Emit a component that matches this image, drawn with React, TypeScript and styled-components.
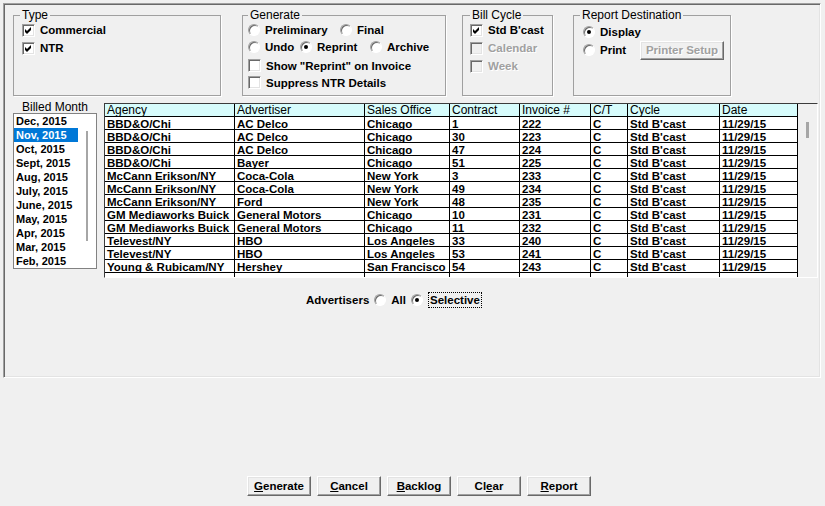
import React from 'react';
import styled, { createGlobalStyle } from 'styled-components';

const GlobalStyle = createGlobalStyle`
  html, body { margin: 0; padding: 0; background: #f0f0f0; }
  body { font-family: "Liberation Sans", Arial, sans-serif; color: #000; }
  #root { width: 825px; height: 506px; overflow: hidden; }
`;

const Screen = styled.div`
  width: 825px;
  height: 506px;
  box-sizing: border-box;
  padding: 3px 0 0 3px;
  background: #f0f0f0;
  display: flex;
  flex-direction: column;
`;

const Panel = styled.div`
  width: 818px;
  height: 375px;
  box-sizing: border-box;
  border: 1px solid;
  border-color: #a0a0a0 #fff #fff #a0a0a0;
  box-shadow: inset 1px 1px 0 #696969, inset -1px -1px 0 #e3e3e3;
  padding-top: 4px;
  display: flex;
  flex-direction: column;
`;

const TopRow = styled.div`
  display: flex;
  align-items: flex-start;
`;

const Group = styled.fieldset<{ $w: number; $ml: number; $pl: number }>`
  margin: 0 0 0 ${(p) => p.$ml}px;
  width: ${(p) => p.$w}px;
  height: 88px;
  min-width: 0;
  box-sizing: border-box;
  padding: 0 0 0 ${(p) => p.$pl}px;
  border: 1px solid #a0a0a0;
  box-shadow: 1px 1px 0 #fff;
`;

const Legend = styled.legend<{ $ml: number }>`
  margin-left: ${(p) => p.$ml}px;
  padding: 0 2px;
  font-size: 12px;
  line-height: 14px;
`;

const Stack = styled.div<{ $top: number; $row: number }>`
  display: flex;
  flex-direction: column;
  margin-top: ${(p) => p.$top}px;
  & > * { height: ${(p) => p.$row}px; }
`;

const Line = styled.div<{ $gapTop?: number }>`
  display: flex;
  align-items: center;
  margin-top: ${(p) => p.$gapTop ?? 0}px;
`;

const Option = styled.label<{ $w?: number; $disabled?: boolean }>`
  display: flex;
  align-items: center;
  gap: 5px;
  flex: none;
  ${(p) => (p.$w ? `width: ${p.$w}px;` : '')}
  font-size: 11.5px;
  font-weight: bold;
  white-space: nowrap;
  color: ${(p) => (p.$disabled ? '#a0a0a0' : '#000')};
  text-shadow: ${(p) => (p.$disabled ? '1px 1px 0 #fff' : 'none')};
`;

const Box = styled.span<{ $disabled?: boolean }>`
  width: 13px;
  height: 13px;
  flex: none;
  box-sizing: border-box;
  display: inline-flex;
  align-items: center;
  justify-content: center;
  background: ${(p) => (p.$disabled ? '#f0f0f0' : '#fff')};
  border: 1px solid;
  border-color: #a0a0a0 #fff #fff #a0a0a0;
  box-shadow: inset 1px 1px 0 #696969, inset -1px -1px 0 #e3e3e3;
`;

const RadioDot = styled.span<{ $checked?: boolean }>`
  width: 12px;
  height: 12px;
  flex: none;
  box-sizing: border-box;
  border-radius: 50%;
  background: #fff;
  border: 1px solid;
  border-color: #a0a0a0 #fff #fff #a0a0a0;
  box-shadow: inset 1px 1px 0 #696969;
  display: inline-flex;
  align-items: center;
  justify-content: center;
  &::after {
    content: '';
    width: 4px;
    height: 4px;
    border-radius: 50%;
    background: #000;
    display: ${(p) => (p.$checked ? 'block' : 'none')};
  }
`;

const WinButton = styled.button<{ $w: number; $h: number; $disabled?: boolean }>`
  width: ${(p) => p.$w}px;
  height: ${(p) => p.$h}px;
  flex: none;
  box-sizing: border-box;
  padding: 0;
  margin: 0;
  background: #f0f0f0;
  border: 1px solid;
  border-color: #fff #696969 #696969 #fff;
  box-shadow: inset -1px -1px 0 #a0a0a0, inset 1px 1px 0 #e3e3e3;
  font-family: "Liberation Sans", Arial, sans-serif;
  font-size: 11.5px;
  font-weight: bold;
  color: ${(p) => (p.$disabled ? '#a0a0a0' : '#000')};
  text-shadow: ${(p) => (p.$disabled ? '1px 1px 0 #fff' : 'none')};
  white-space: nowrap;
`;

const Key = styled.span`
  text-decoration: underline;
`;

const MiddleRow = styled.div`
  display: flex;
  align-items: flex-start;
  margin-top: 4px;
  padding-left: 9px;
`;

const MonthColumn = styled.div`
  width: 84px;
  flex: none;
  display: flex;
  flex-direction: column;
`;

const MonthLabel = styled.div`
  height: 13px;
  font-size: 12px;
  line-height: 14px;
  text-align: center;
  white-space: nowrap;
`;

const MonthList = styled.div`
  height: 156px;
  box-sizing: border-box;
  border: 1px solid #828282;
  background: #fff;
  display: flex;
`;

const MonthItems = styled.div`
  width: 64px;
  display: flex;
  flex-direction: column;
`;

const MonthItem = styled.div<{ $selected?: boolean }>`
  height: 14px;
  line-height: 14px;
  padding-left: 2px;
  font-size: 11px;
  font-weight: bold;
  white-space: nowrap;
  background: ${(p) => (p.$selected ? '#0078d7' : 'transparent')};
  color: ${(p) => (p.$selected ? '#fff' : '#000')};
`;

const ScrollTrack = styled.div<{ $top: number; $left: number }>`
  flex: 1;
  padding: ${(p) => p.$top}px 0 0 ${(p) => p.$left}px;
`;

const Thumb = styled.div<{ $w: number; $h: number }>`
  width: ${(p) => p.$w}px;
  height: ${(p) => p.$h}px;
  background: #a6a6a6;
`;

const GridFrame = styled.div`
  margin: 3px 0 0 7px;
  width: 714px;
  height: 175px;
  box-sizing: border-box;
  border: 1px solid;
  border-color: #3c3c3c #fff #fff #3c3c3c;
  background: #f0f0f0;
  display: flex;
  overflow: hidden;
`;

const Grid = styled.div`
  display: grid;
  grid-template-columns: 130px 130px 85px 70px 71px 37px 92px 78px;
  grid-auto-rows: 13px;
  width: 693px;
  flex: none;
  align-content: start;
`;

const HeadCell = styled.div`
  box-sizing: border-box;
  border-right: 1px solid #000;
  border-bottom: 1px solid #000;
  background: #d7fcfc;
  padding-left: 2px;
  font-size: 12px;
  line-height: 13px;
  white-space: nowrap;
  overflow: hidden;
`;

const Cell = styled.div`
  box-sizing: border-box;
  border-right: 1px solid #000;
  border-bottom: 1px solid #000;
  background: #fff;
  padding-left: 2px;
  font-size: 11.5px;
  font-weight: bold;
  line-height: 14px;
  white-space: nowrap;
  overflow: hidden;
`;

const AdvRow = styled.div`
  display: flex;
  align-items: center;
  gap: 5px;
  height: 16px;
  margin: 14px 0 0 302px;
`;

const AdvLabel = styled.span`
  font-size: 11.5px;
  font-weight: bold;
`;

const Focus = styled.span`
  box-sizing: border-box;
  height: 16px;
  line-height: 14px;
  padding: 0 1px;
  border: 1px dotted #000;
`;

const ButtonBar = styled.div`
  display: flex;
  gap: 6px;
  margin-top: 98px;
  padding-left: 244px;
`;

const Check = ({ disabled, checked }: { disabled?: boolean; checked?: boolean }) => (
  <Box $disabled={disabled}>
    {checked && (
      <svg width="7" height="7" viewBox="0 0 7 7">
        <polygon points="0,2 2,4 6,0 6,3 2,7 0,5" fill="#000" />
      </svg>
    )}
  </Box>
);

const columns = ['Agency', 'Advertiser', 'Sales Office', 'Contract', 'Invoice #', 'C/T', 'Cycle', 'Date'];

const rows: string[][] = [
  ['BBD&O/Chi', 'AC Delco', 'Chicago', '1', '222'],
  ['BBD&O/Chi', 'AC Delco', 'Chicago', '30', '223'],
  ['BBD&O/Chi', 'AC Delco', 'Chicago', '47', '224'],
  ['BBD&O/Chi', 'Bayer', 'Chicago', '51', '225'],
  ['McCann Erikson/NY', 'Coca-Cola', 'New York', '3', '233'],
  ['McCann Erikson/NY', 'Coca-Cola', 'New York', '49', '234'],
  ['McCann Erikson/NY', 'Ford', 'New York', '48', '235'],
  ['GM Mediaworks Buick', 'General Motors', 'Chicago', '10', '231'],
  ['GM Mediaworks Buick', 'General Motors', 'Chicago', '11', '232'],
  ['Televest/NY', 'HBO', 'Los Angeles', '33', '240'],
  ['Televest/NY', 'HBO', 'Los Angeles', '53', '241'],
  ['Young & Rubicam/NY', 'Hershey', 'San Francisco', '54', '243'],
].map((r) => [...r, 'C', "Std B'cast", '11/29/15']);

const months = [
  'Dec, 2015', 'Nov, 2015', 'Oct, 2015', 'Sept, 2015', 'Aug, 2015', 'July, 2015',
  'June, 2015', 'May, 2015', 'Apr, 2015', 'Mar, 2015', 'Feb, 2015',
];

export default function App() {
  return (
    <>
      <GlobalStyle />
      <Screen>
        <Panel>
          <TopRow>
            <Group $w={208} $ml={9} $pl={8}>
              <Legend $ml={-2}>Type</Legend>
              <Stack $top={-1} $row={18}>
                <Option><Check checked />Commercial</Option>
                <Option><Check checked />NTR</Option>
              </Stack>
            </Group>

            <Group $w={204} $ml={21} $pl={5}>
              <Legend $ml={0}>Generate</Legend>
              <Stack $top={-1} $row={17}>
                <Line>
                  <Option $w={92}><RadioDot />Preliminary</Option>
                  <Option><RadioDot />Final</Option>
                </Line>
                <Line>
                  <Option $w={52}><RadioDot />Undo</Option>
                  <Option $w={70}><RadioDot $checked />Reprint</Option>
                  <Option><RadioDot />Archive</Option>
                </Line>
                <Line $gapTop={2}>
                  <Option><Check />{'Show "Reprint" on Invoice'}</Option>
                </Line>
                <Line>
                  <Option><Check />Suppress NTR Details</Option>
                </Line>
              </Stack>
            </Group>

            <Group $w={91} $ml={16} $pl={7}>
              <Legend $ml={0}>Bill Cycle</Legend>
              <Stack $top={-1} $row={18}>
                <Option><Check checked />Std B'cast</Option>
                <Option $disabled><Check disabled />Calendar</Option>
                <Option $disabled><Check disabled />Week</Option>
              </Stack>
            </Group>

            <Group $w={158} $ml={20} $pl={9}>
              <Legend $ml={-3}>Report Destination</Legend>
              <Stack $top={1} $row={18}>
                <Option><RadioDot $checked />Display</Option>
                <Line>
                  <Option $w={57}><RadioDot />Print</Option>
                  <WinButton $w={84} $h={19} $disabled disabled>Printer Setup</WinButton>
                </Line>
              </Stack>
            </Group>
          </TopRow>

          <MiddleRow>
            <MonthColumn>
              <MonthLabel>Billed Month</MonthLabel>
              <MonthList>
                <MonthItems>
                  {months.map((m, i) => (
                    <MonthItem key={m} $selected={i === 1}>{m}</MonthItem>
                  ))}
                </MonthItems>
                <ScrollTrack $top={17} $left={8}>
                  <Thumb $w={2} $h={110} />
                </ScrollTrack>
              </MonthList>
            </MonthColumn>

            <GridFrame>
              <Grid>
                {columns.map((c) => (
                  <HeadCell key={c}>{c}</HeadCell>
                ))}
                {rows.map((r, ri) =>
                  r.map((v, ci) => <Cell key={`${ri}-${ci}`}>{v}</Cell>)
                )}
                {columns.map((c) => (
                  <Cell key={`blank-${c}`} />
                ))}
              </Grid>
              <ScrollTrack $top={18} $left={8}>
                <Thumb $w={3} $h={16} />
              </ScrollTrack>
            </GridFrame>
          </MiddleRow>

          <AdvRow>
            <AdvLabel>Advertisers</AdvLabel>
            <Option><RadioDot />All</Option>
            <Option><RadioDot $checked /><Focus>Selective</Focus></Option>
          </AdvRow>
        </Panel>

        <ButtonBar>
          <WinButton $w={64} $h={20}><Key>G</Key>enerate</WinButton>
          <WinButton $w={64} $h={20}><Key>C</Key>ancel</WinButton>
          <WinButton $w={64} $h={20}><Key>B</Key>acklog</WinButton>
          <WinButton $w={64} $h={20}>Cl<Key>e</Key>ar</WinButton>
          <WinButton $w={64} $h={20}><Key>R</Key>eport</WinButton>
        </ButtonBar>
      </Screen>
    </>
  );
}
